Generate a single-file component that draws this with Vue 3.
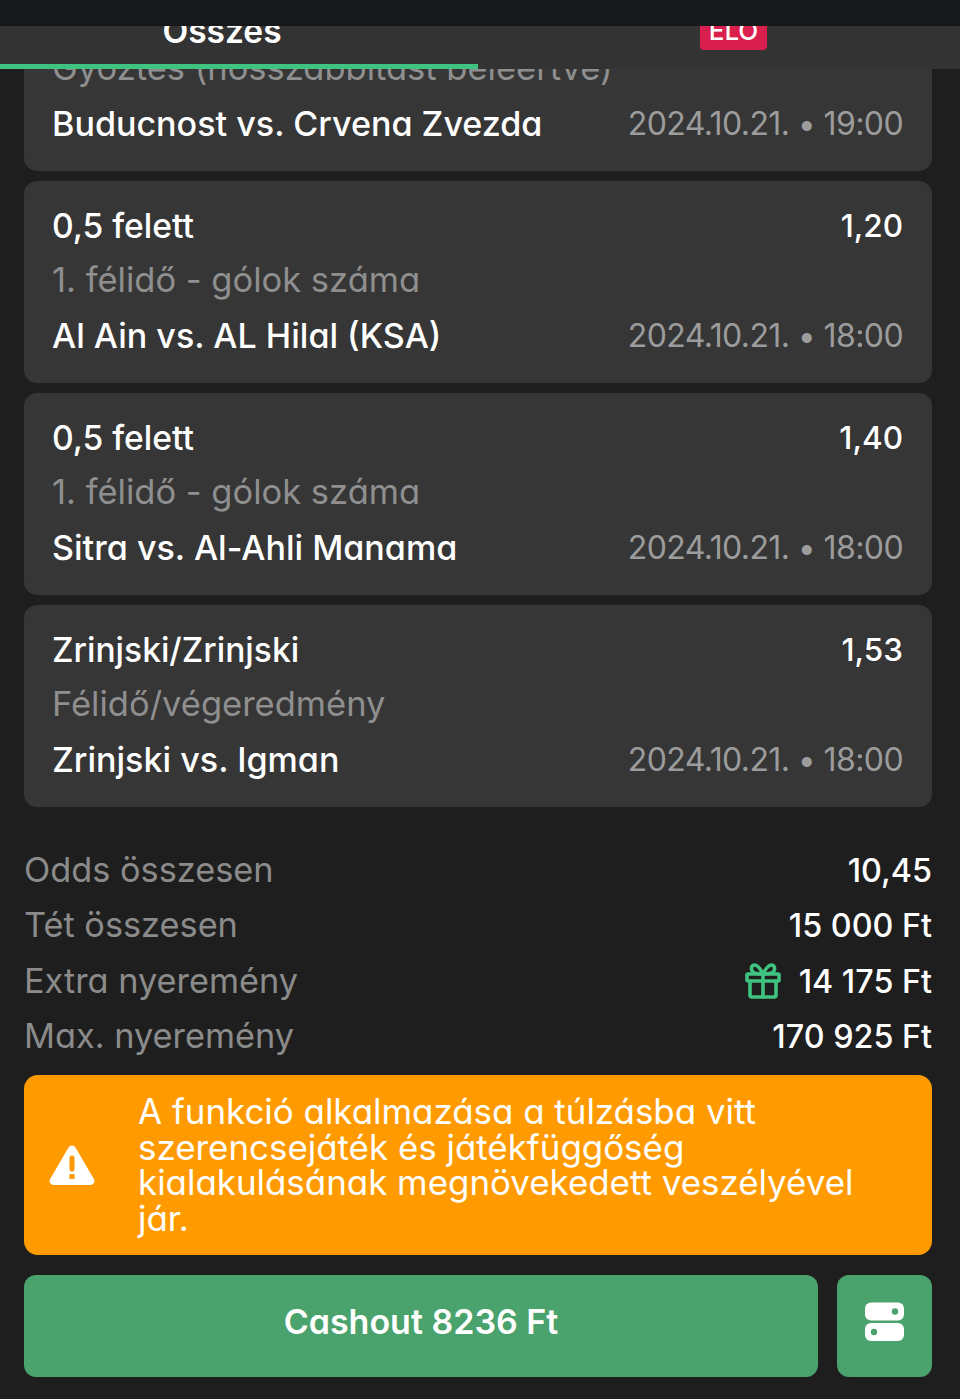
<template>
  <div class="screen">
    <div class="top-overlay">
      <div class="status-bar"></div>
      <div class="tabs">
        <div class="tab"><span class="tab-label">Összes</span></div>
        <div class="tab"><span class="live-badge">ÉLŐ</span></div>
        <div class="tab-indicator"></div>
      </div>
    </div>

    <div class="bets">
      <div v-for="(b, i) in bets" :key="i" class="bet-card">
        <div class="bet-row">
          <span class="bet-pick">{{ b.pick }}</span>
          <span class="bet-odds">{{ b.odds }}</span>
        </div>
        <div class="bet-market">{{ b.market }}</div>
        <div class="bet-row">
          <span class="bet-match">{{ b.match }}</span>
          <span class="bet-date">{{ b.date }}</span>
        </div>
      </div>
    </div>

    <div class="summary">
      <div class="summary-row">
        <span class="summary-label">Odds összesen</span>
        <span class="summary-value">10,45</span>
      </div>
      <div class="summary-row">
        <span class="summary-label">Tét összesen</span>
        <span class="summary-value">15 000 Ft</span>
      </div>
      <div class="summary-row">
        <span class="summary-label">Extra nyeremény</span>
        <span class="summary-value with-icon">
          <svg class="gift" viewBox="0 0 36 36" fill="none" stroke="#3fc380" stroke-width="3.6" stroke-linejoin="round" stroke-linecap="round">
            <rect x="2" y="11" width="32" height="7" rx="1" />
            <path d="M5 18v14a2 2 0 0 0 2 2h22a2 2 0 0 0 2-2V18" />
            <path d="M18 11v23" />
            <path d="M18 11C15 5 12 2 9.500 2 6.500 2 5.500 6 7.500 8.500 9 10.500 13 11 18 11Z" />
            <path d="M18 11C21 5 24 2 26.500 2 29.500 2 30.500 6 28.500 8.500 27 10.500 23 11 18 11Z" />
          </svg>
          14 175 Ft
        </span>
      </div>
      <div class="summary-row">
        <span class="summary-label">Max. nyeremény</span>
        <span class="summary-value">170 925 Ft</span>
      </div>
    </div>

    <div class="warning">
      <svg class="warning-icon" viewBox="0 0 46 40">
        <path fill="#fff" fill-rule="evenodd" d="M19.500 2.500a4 4 0 0 1 7 0l18.300 31.500a4 4 0 0 1-3.500 6H4.700a4 4 0 0 1-3.500-6ZM20.500 13v11a2.500 2.500 0 0 0 5 0V13a2.500 2.500 0 0 0-5 0ZM20.500 29v5h5v-5Z" />
      </svg>
      <p class="warning-text">A funkció alkalmazása a túlzásba vitt szerencsejáték és játékfüggőség kialakulásának megnövekedett veszélyével jár.</p>
    </div>

    <div class="actions">
      <button class="cashout">Cashout 8236 Ft</button>
      <button class="stack-btn">
        <svg viewBox="0 0 40 40" width="40" height="40">
          <rect x="0" y="0.500" width="39" height="18" rx="6" fill="#fff" />
          <rect x="0" y="21" width="39" height="18" rx="6" fill="#fff" />
          <circle cx="30" cy="9.500" r="3.200" fill="#4aa26c" />
          <circle cx="9" cy="30" r="3.200" fill="#4aa26c" />
        </svg>
      </button>
    </div>
  </div>
</template>

<script setup>
const bets = [
  { pick: 'Győztes', odds: '1,30', market: 'Győztes (hosszabbítást beleértve)', match: 'Buducnost vs. Crvena Zvezda', date: '2024.10.21. • 19:00' },
  { pick: '0,5 felett', odds: '1,20', market: '1. félidő - gólok száma', match: 'Al Ain vs. AL Hilal (KSA)', date: '2024.10.21. • 18:00' },
  { pick: '0,5 felett', odds: '1,40', market: '1. félidő - gólok száma', match: 'Sitra vs. Al-Ahli Manama', date: '2024.10.21. • 18:00' },
  { pick: 'Zrinjski/Zrinjski', odds: '1,53', market: 'Félidő/végeredmény', match: 'Zrinjski vs. Igman', date: '2024.10.21. • 18:00' },
]
</script>

<style>
html, body {
  margin: 0;
  background: #1e1e1e;
}
</style>

<style scoped>
.screen {
  position: relative;
  width: 960px;
  height: 1399px;
  overflow: hidden;
  background: #1e1e1e;
  font-family: 'Inter', 'Noto Sans', sans-serif;
  font-feature-settings: 'cv11';
  color: #fff;
}

.top-overlay {
  position: absolute;
  top: 0;
  left: 0;
  right: 0;
  z-index: 2;
}

.status-bar {
  height: 26px;
  background: #17181a;
  position: relative;
  z-index: 1;
}

.tabs {
  position: relative;
  display: flex;
  height: 43px;
  background: #333333;
}

.tab {
  display: flex;
  justify-content: center;
  margin-top: -14px;
  height: 38px;
  align-items: flex-start;
}

.tab:first-child {
  flex: 0 0 444px;
}

.tab:nth-child(2) {
  flex: 1;
  padding-left: 63px;
}

.tab-label {
  font-size: 33.500px;
  line-height: 38px;
  font-weight: 600;
}

.live-badge {
  background: #d81f4e;
  font-size: 26px;
  line-height: 38px;
  font-weight: 500;
  height: 38px;
  padding: 0 9px;
  border-radius: 0 0 4px 4px;
}

.tab-indicator {
  position: absolute;
  left: 0;
  bottom: 0;
  width: 478px;
  height: 5px;
  background: #3fc380;
}

.bets {
  display: flex;
  flex-direction: column;
  gap: 10px;
  margin: -31px 28px 0 24px;
}

.bet-card {
  box-sizing: border-box;
  height: 202px;
  padding: 20px 29px 0 28px;
  background: #363636;
  border-radius: 13px;
}

.bet-row {
  display: flex;
  justify-content: space-between;
  align-items: center;
  height: 48px;
}

.bet-pick {
  font-size: 33.600px;
  font-weight: 500;
}

.bet-match {
  font-size: 34.100px;
  font-weight: 500;
}

.bet-odds {
  font-size: 31.500px;
  font-weight: 500;
}

.bet-market {
  height: 62px;
  line-height: 62px;
  font-size: 34.500px;
  color: #8f8f8f;
}

.bet-date {
  font-size: 32px;
  letter-spacing: -0.600px;
  color: #9c9c9c;
}

.summary {
  margin: 36px 28px 0 24px;
  display: flex;
  flex-direction: column;
}

.summary-row {
  display: flex;
  justify-content: space-between;
  align-items: center;
  height: 55.300px;
}

.summary-label {
  font-size: 34.300px;
  color: #8b8b8b;
  margin-bottom: 2px;
}

.summary-value {
  font-size: 32.300px;
  font-weight: 500;
}

.with-icon {
  display: flex;
  align-items: center;
  gap: 18px;
}

.gift {
  width: 36px;
  height: 36px;
}

.warning {
  box-sizing: border-box;
  display: flex;
  align-items: center;
  height: 180px;
  margin: 11px 28px 0 24px;
  padding: 0 40px 0 25px;
  background: #ff9b00;
  border-radius: 14px;
}

.warning-icon {
  width: 46px;
  height: 40px;
  flex: none;
  margin-right: 43px;
}

.warning-text {
  margin: 0;
  font-size: 34.900px;
  line-height: 35.500px;
  color: #fff;
}

.actions {
  display: flex;
  gap: 19px;
  margin: 20px 28px 0 24px;
}

.cashout {
  flex: 1;
  height: 102px;
  border: none;
  border-radius: 12px;
  background: #4aa26c;
  color: #fff;
  font-family: inherit;
  font-feature-settings: inherit;
  font-size: 34px;
  font-weight: 600;
  padding: 0 0 9px;
}

.stack-btn {
  width: 95px;
  height: 102px;
  border: none;
  border-radius: 12px;
  background: #4aa26c;
  display: flex;
  align-items: center;
  justify-content: center;
  padding: 0 0 9px;
}
</style>
